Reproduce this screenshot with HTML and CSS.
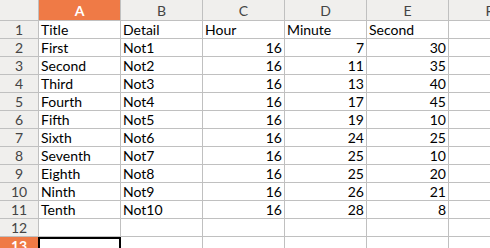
FILE: index.html
```html
<!DOCTYPE html>
<html lang="en">
<head>
    <meta charset="UTF-8">
    <title>Sheet</title>
    <link rel="stylesheet" href="styles.css">
</head>
<body>
    <div class="sheet">
        <!-- column headers -->
        <div class="corner"></div>
        <div class="colhead active">A</div>
        <div class="colhead">B</div>
        <div class="colhead">C</div>
        <div class="colhead">D</div>
        <div class="colhead">E</div>
        <div class="colhead">F</div>

        <div class="rowhead">1</div>
        <div class="cell">Title</div><div class="cell">Detail</div><div class="cell">Hour</div><div class="cell">Minute</div><div class="cell">Second</div><div class="cell"></div>

        <div class="rowhead">2</div>
        <div class="cell">First</div><div class="cell">Not1</div><div class="cell num">16</div><div class="cell num">7</div><div class="cell num">30</div><div class="cell"></div>

        <div class="rowhead">3</div>
        <div class="cell">Second</div><div class="cell">Not2</div><div class="cell num">16</div><div class="cell num">11</div><div class="cell num">35</div><div class="cell"></div>

        <div class="rowhead">4</div>
        <div class="cell">Third</div><div class="cell">Not3</div><div class="cell num">16</div><div class="cell num">13</div><div class="cell num">40</div><div class="cell"></div>

        <div class="rowhead">5</div>
        <div class="cell">Fourth</div><div class="cell">Not4</div><div class="cell num">16</div><div class="cell num">17</div><div class="cell num">45</div><div class="cell"></div>

        <div class="rowhead">6</div>
        <div class="cell">Fifth</div><div class="cell">Not5</div><div class="cell num">16</div><div class="cell num">19</div><div class="cell num">10</div><div class="cell"></div>

        <div class="rowhead">7</div>
        <div class="cell">Sixth</div><div class="cell">Not6</div><div class="cell num">16</div><div class="cell num">24</div><div class="cell num">25</div><div class="cell"></div>

        <div class="rowhead">8</div>
        <div class="cell">Seventh</div><div class="cell">Not7</div><div class="cell num">16</div><div class="cell num">25</div><div class="cell num">10</div><div class="cell"></div>

        <div class="rowhead">9</div>
        <div class="cell">Eighth</div><div class="cell">Not8</div><div class="cell num">16</div><div class="cell num">25</div><div class="cell num">20</div><div class="cell"></div>

        <div class="rowhead">10</div>
        <div class="cell">Ninth</div><div class="cell">Not9</div><div class="cell num">16</div><div class="cell num">26</div><div class="cell num">21</div><div class="cell"></div>

        <div class="rowhead">11</div>
        <div class="cell">Tenth</div><div class="cell">Not10</div><div class="cell num">16</div><div class="cell num">28</div><div class="cell num">8</div><div class="cell"></div>

        <div class="rowhead">12</div>
        <div class="cell"></div><div class="cell"></div><div class="cell"></div><div class="cell"></div><div class="cell"></div><div class="cell"></div>

        <div class="rowhead active">13</div>
        <div class="cell selected"></div><div class="cell"></div><div class="cell"></div><div class="cell"></div><div class="cell"></div><div class="cell"></div>
    </div>
</body>
</html>
```

FILE: styles.css
```css
body {
    margin: 0;
    background-color: #fff;
    overflow: hidden;
    font-family: Lato, "Liberation Sans", sans-serif;
    font-size: 14px;
}
.sheet {
    display: grid;
    grid-template-columns: 39px repeat(6, 82px);
    grid-template-rows: 21px;
    grid-auto-rows: 18px;
}
.corner,
.colhead,
.rowhead {
    background-color: #f0efed;
    color: #444;
    box-sizing: border-box;
    border-right: 1px solid #c0c0c0;
    border-bottom: 1px solid #c0c0c0;
    display: flex;
    align-items: center;
    justify-content: center;
}
.colhead {
    padding-top: 1px;
}
.colhead.active,
.rowhead.active {
    background-color: #ef7a46;
    color: #fff;
    font-weight: bold;
}
.cell {
    box-sizing: border-box;
    border-right: 1px solid #c0c0c0;
    border-bottom: 1px solid #c0c0c0;
    color: #000;
    padding: 0 2px;
    line-height: 17px;
    white-space: nowrap;
    overflow: hidden;
}
.num {
    text-align: right;
}
.selected {
    border: 2px solid #000;
    margin-left: -1px;
}
```
